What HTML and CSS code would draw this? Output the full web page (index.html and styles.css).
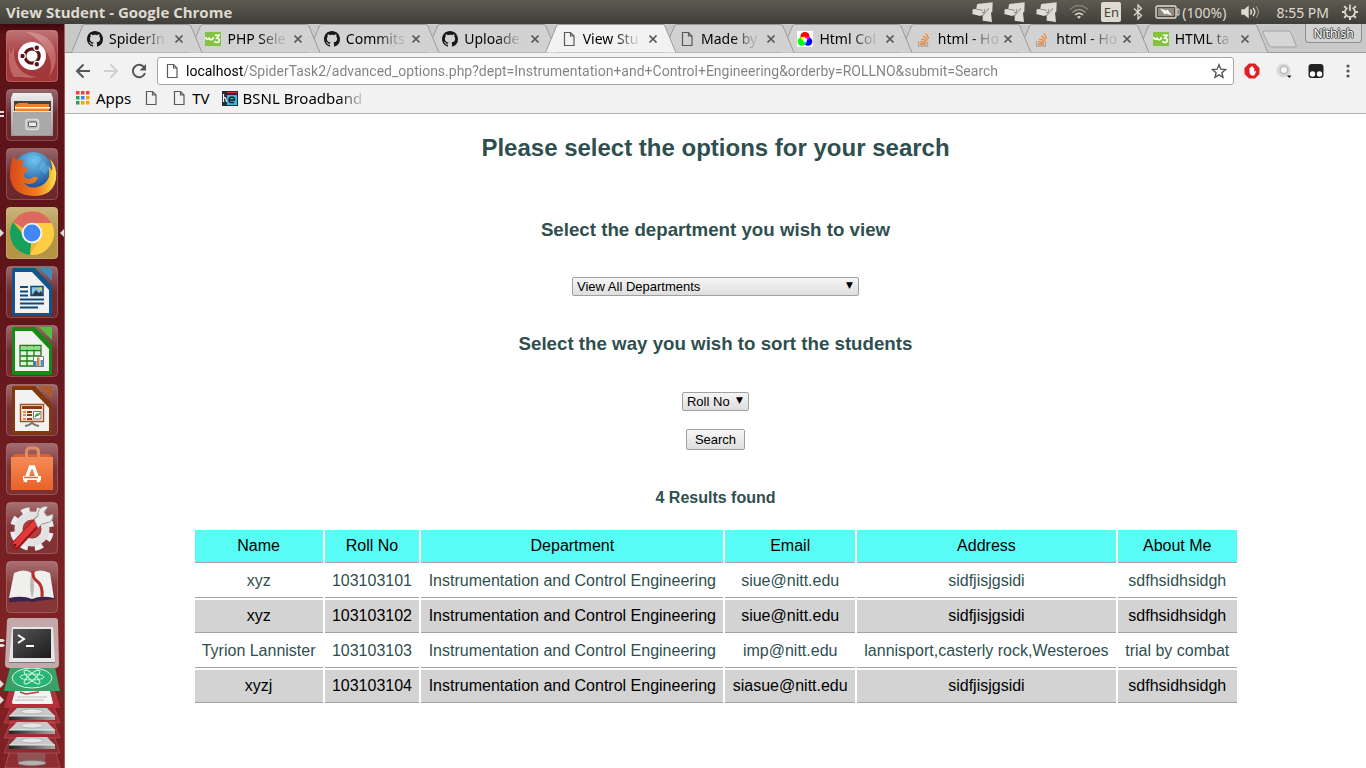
FILE: index.html
```html
<!DOCTYPE html>
<html lang="en">
<head>
<meta charset="utf-8">
<title>View Student</title>
<meta name="viewport" content="width=device-width, initial-scale=1">
<link rel="stylesheet" href="styles.css">
</head>
<body>
<svg class="defs" width="0" height="0" aria-hidden="true">
  <defs>
    <linearGradient id="gloss" x1="0" y1="0" x2="0" y2="1"><stop offset="0" stop-color="#fff" stop-opacity=".36"/><stop offset=".5" stop-color="#fff" stop-opacity=".1"/><stop offset="1" stop-color="#fff" stop-opacity=".08"/></linearGradient>
    <linearGradient id="metal" x1="0" y1="0" x2="0" y2="1"><stop offset="0" stop-color="#eee"/><stop offset="1" stop-color="#979797"/></linearGradient>
    <linearGradient id="orange" x1="0" y1="0" x2="0" y2="1"><stop offset="0" stop-color="#f58b55"/><stop offset="1" stop-color="#e8622a"/></linearGradient>
    <linearGradient id="flame" x1="0" y1="0" x2="1" y2="0"><stop offset="0" stop-color="#d9471b"/><stop offset=".6" stop-color="#f08020"/><stop offset="1" stop-color="#ffe14a"/></linearGradient>
    <radialGradient id="globe" cx=".5" cy=".2" r=".8"><stop offset="0" stop-color="#6cc4ee"/><stop offset="1" stop-color="#12408c"/></radialGradient>
    <linearGradient id="screen" x1="0" y1="0" x2="1" y2="1"><stop offset="0" stop-color="#555"/><stop offset="1" stop-color="#1c1c1c"/></linearGradient>
    <linearGradient id="rim" x1="0" y1="0" x2="1" y2="0"><stop offset="0" stop-color="#222"/><stop offset="1" stop-color="#aaa"/></linearGradient>
    <symbol id="tab" viewBox="0 0 131 29" preserveAspectRatio="none"><path d="M.5 28.500 11.500 2q.6-1.500 2-1.500h104q1.400 0 2 1.500L130.500 28.500" stroke="#9a9a9a" vector-effect="non-scaling-stroke"/></symbol>
    <symbol id="page" viewBox="0 0 16 16"><path d="M3.500 1.500h6l3.500 3.500v9.500h-9.500zM9.500 1.500v3.500h3.500" fill="none" stroke="#5a5a5a" stroke-width="1.200"/></symbol>
    <symbol id="x" viewBox="0 0 16 16"><path d="m4.500 4.500 7 7m0-7-7 7" stroke="#555" stroke-width="1.700"/></symbol>
    <symbol id="octo" viewBox="0 0 16 16"><path fill="#191717" d="M8 0C3.580 0 0 3.580 0 8c0 3.540 2.290 6.530 5.470 7.590.4.070.55-.17.55-.38 0-.19-.01-.82-.01-1.490-2.010.37-2.530-.49-2.690-.94-.09-.23-.48-.94-.82-1.130-.28-.15-.68-.52-.01-.53.63-.01 1.080.58 1.230.82.72 1.210 1.870.87 2.330.66.070-.52.28-.87.51-1.070-1.780-.2-3.640-.89-3.640-3.950 0-.87.310-1.590.82-2.150-.08-.2-.36-1.020.08-2.120 0 0 .67-.21 2.200.82.64-.18 1.320-.27 2-.27s1.360.09 2 .27c1.530-1.040 2.200-.82 2.200-.82.440 1.100.160 1.920.080 2.120.510.560.820 1.270.820 2.150 0 3.070-1.870 3.750-3.650 3.950.290.250.540.730.540 1.480 0 1.070-.010 1.930-.010 2.200 0 .210.150.460.550.380A8.010 8.010 0 0 0 16 8c0-4.420-3.580-8-8-8z"/></symbol>
    <symbol id="w3" viewBox="0 0 16 16"><path fill="#83c341" d="M0 1h16v14H0z"/><path d="M.8 6c0 3 3.200 3 3.400.5.200 3 4 3 4.100-.5M9.800 4.200h4.400l-2.500 3q2.800 0 2.600 2.400c-.3 2.600-4.200 2.600-4.800.4" fill="none" stroke="#fff" stroke-width="1.500"/></symbol>
    <symbol id="so" viewBox="0 0 16 16"><path d="M2.500 10v5h9v-5" fill="none" stroke="#a9a9a9" stroke-width="1.300"/><path d="M4 13h6M4.200 10.700l5.900.6M5 8l5.700 1.700M7 5l4.600 3.600M9.800 2.500l3 5" stroke="#f48024" stroke-width="1.300"/></symbol>
    <symbol id="rgb" viewBox="0 0 16 16"><path fill="#fff" d="M0 0h16v16H0z"/><circle cx="8" cy="5.500" r="4.500" fill="red"/><circle cx="5" cy="10.500" r="4.300" fill="#0f0"/><circle cx="11" cy="10.500" r="4.300" fill="#00f"/><path d="m3.500 6.300 4.500-.8v4l-3-.5z" fill="#ff0"/><path d="m12.500 6.300-4.500-.8v4l3-.5z" fill="#f0f"/><path d="m6 10 2-1 2 1-2 4z" fill="#0ff"/><circle cx="8" cy="9" r="2" fill="#fff"/></symbol>
    <symbol id="drop" viewBox="0 0 22 22"><path d="M6.300 3 21.700 1.300l-.4 9.400-1.300 1 1 9.300-9.300-1.300V14L9 15l-7.700-2 .4-4.700L5 8z" fill="#dedbd4"/><path d="m14 8-1.500 6.500M18 7l-4 5-3-.5M5 8l7 1.500" fill="none" stroke="#85827a" stroke-width=".9"/></symbol>
    <symbol id="tile" viewBox="0 0 52 52"><rect x=".5" y=".5" width="51" height="51" rx="4" fill="url(#gloss)" stroke="#fff" stroke-opacity=".22"/></symbol>
  </defs>
</svg>

<header class="panel">
  <span class="panel-title">View Student - Google Chrome</span>
  <div class="indicators">
    <svg class="drop" width="22" height="22"><use href="#drop"/></svg>
    <svg class="drop" width="22" height="22"><use href="#drop"/></svg>
    <svg class="drop" width="22" height="22"><use href="#drop"/></svg>
    <svg class="wifi" width="20" height="16" viewBox="0 0 20 16" fill="none" stroke="#dfdbd2" stroke-width="1.500"><path d="M1 5.500q9-8 18 0" opacity=".35"/><path d="M3.500 8.500q6.500-6 13 0" opacity=".5"/><path d="M6 11q4-3.500 8 0"/><path d="m8 12.800q2-1.500 4 0l-2 2z" fill="#dfdbd2" stroke="none"/></svg>
    <span class="lang">En</span>
    <svg class="bt" width="10" height="16" viewBox="0 0 10 16" fill="none" stroke="#dfdbd2" stroke-width="1.300"><path d="m1 4.500 7.500 7L5 15V1l3.500 3.500-7.500 7"/></svg>
    <svg class="battery" width="25" height="14" viewBox="0 0 25 14"><rect x="1" y="1" width="20" height="12" rx="1.500" fill="none" stroke="#dfdbd2" stroke-width="1.400"/><path d="M3 3h16v8H3z" fill="#8e8b83"/><path d="M22 4h2v6h-2z" fill="none" stroke="#dfdbd2"/><path d="m5 3.500 6.500 2 1-1 4.500 6-6-2-1 1.200z" fill="#f5f3ee"/></svg>
    <span class="charge">(100%)</span>
    <svg class="sound" width="20" height="14" viewBox="0 0 20 14" fill="none" stroke="#dfdbd2" stroke-width="1.400"><path d="M1 5h2.500L7 2v10L3.500 9H1z" fill="#dfdbd2"/><path d="M9.500 4.500q2 2.500 0 5M12 3q3.500 4 0 8"/><path d="M15 1.500q5 5.500 0 11" opacity=".45"/></svg>
    <time class="clock">8:55 PM</time>
    <svg width="18" height="18" viewBox="0 0 18 18" fill="none" stroke="#dfdbd2"><path d="M6.500 4.700a5 5 0 1 0 5 0" stroke-width="1.700"/><path d="M9 1.500v6.500" stroke-width="1.700"/><path d="m4.800 4.800-1.600-1.600M13.200 4.800l1.600-1.600M3.500 9H1m13.500 0H17M5 13l-1.800 1.800m9.800-1.800 1.800 1.800M9 14.500V17" stroke-width="2"/></svg>
  </div>
</header>

<div class="desktop">
  <nav class="launcher" aria-label="Launcher">
    <ul class="apps">
      <li><button aria-label="Dash"><svg viewBox="0 0 52 52"><rect width="52" height="52" rx="4" fill="#9a2527"/><path d="M20 2q26 1 29 20 3 12-6 25 5-14-2-24Q35 9 20 2zM3 14q2 30 28 33-25 4-28-15zM8 47q-9-12 0-31-2 25 19 31z" fill="#e9a3a0" opacity=".4"/><use href="#tile"/><circle cx="26" cy="26" r="14" fill="#fff"/><circle cx="26" cy="26" r="7.200" fill="none" stroke="#5c1418" stroke-width="3.200"/><g fill="#5c1418" stroke="#fff" stroke-width="1.200"><circle cx="16.500" cy="26" r="2.800"/><circle cx="30.800" cy="17.800" r="2.800"/><circle cx="30.800" cy="34.200" r="2.800"/></g></svg></button></li>
      <li class="twin"><button aria-label="Files"><svg viewBox="0 0 52 52"><use href="#tile"/><path d="M7 4h38l2 5v38H5V9z" fill="url(#metal)"/><path d="M8 12h37v13H8z" fill="#444"/><path d="m9 16 4-2h8l2 1h20v9H9z" fill="#ef812b"/><path d="M9 18h35v1.500H9z" fill="#fff"/><path d="M7 22h38v24H7z" fill="#a9a9a9"/><path d="M7 22h38v1H7z" fill="#e6e6e6"/><rect x="20" y="30.500" width="12.500" height="10" rx="2" fill="#b8b8b8" stroke="#ddd" stroke-width="1.500"/><rect x="22.500" y="33" width="8" height="4.500" rx="1" fill="#ececec" stroke="#555"/></svg></button></li>
      <li><button aria-label="Firefox"><svg viewBox="0 0 52 52"><use href="#tile"/><circle cx="27" cy="24" r="20" fill="url(#globe)"/><path d="M29 7q9 2 5 7l-5 3-3-3zM37 13l7 8-5 5-6-5z" fill="#7cc9ec" opacity=".35"/><path d="M7 9l4 3 8 1q-5 3-1 7l4-1q-1 5-4 7-1 5 6 5 4-4 8-1-2 5-8 6-3 0-6-1 5 6 13 4 9-2 12-10 1-8-1-12l4 6q1-7-3-13 9 8 7 21-3 17-22 17Q5 47 4 28q0-11 3-19z" fill="url(#flame)"/></svg></button></li>
      <li class="current"><button aria-label="Google Chrome"><svg viewBox="0 0 52 52"><rect width="52" height="52" rx="4" fill="#ad8b36"/><use href="#tile"/><circle cx="26" cy="26" r="22" fill="#e8b93b"/><path d="M26 26 7 15A22 22 0 0 1 45.500 16H26z" fill="#dd6a60"/><path d="M26 26H16L7 15a22 22 0 0 0 17 33z" fill="#16a05c"/><path d="M26 16h19.500A22 22 0 0 1 24 48l11-18z" fill="#ffcd41"/><circle cx="26" cy="26" r="10.300" fill="#f5f5f5"/><circle cx="26" cy="26" r="8.400" fill="#4285f4"/></svg></button></li>
      <li><button aria-label="Writer"><svg viewBox="0 0 52 52"><use href="#tile"/><path d="M8 2h21l17 18v28q0 2-2 2H8q-2 0-2-2V4q0-2 2-2z" fill="#11558c"/><path d="M33 2h13v13z" fill="#4487b9"/><path d="M9 6h17l17 18v23H9z" fill="#f2f2f2"/><path d="M14 21h8m-8 4.500h8m-8 4h8m-8 4h24m-24 4h24m-24 4h18" stroke="#0a4a7e" stroke-width="2"/><path d="M25 20.500h12v9H25z" fill="#89c6e8" stroke="#0a4a7e" stroke-width="1.500"/><path d="m26 29 4-5 3 3 2-2 2 4z" fill="#303b40"/><circle cx="34.500" cy="22.500" r="1.300" fill="#fc3"/></svg></button></li>
      <li><button aria-label="Calc"><svg viewBox="0 0 52 52"><use href="#tile"/><path d="M8 2h21l17 18v28q0 2-2 2H8q-2 0-2-2V4q0-2 2-2z" fill="#188a12"/><path d="M33 2h13v13z" fill="#55bd42"/><path d="M9 6h17l17 18v22H9z" fill="#f2f2f2"/><path d="M14 20.500h21V41H14zM14 25.500h21M14 31h21M14 36h21M21 20.500V41M28 20.500V41" fill="#dff4da" stroke="#1b7d15" stroke-width="1.300"/><path d="M15 21.500h19v3H15z" fill="#8edb83"/><path d="M27.500 31.500h10v10h-10z" fill="#fff" stroke="#777"/><path d="M28 36h2.500v5H28z" fill="#2a82c6"/><path d="M31 32.500h2.500V41H31z" fill="#e4782a"/><path d="M34.500 35H37v6h-2.500z" fill="#4595cd"/></svg></button></li>
      <li><button aria-label="Impress"><svg viewBox="0 0 52 52"><use href="#tile"/><path d="M8 2h21l17 18v28q0 2-2 2H8q-2 0-2-2V4q0-2 2-2z" fill="#82390c"/><path d="M33 2h13v13z" fill="#ab5b2e"/><path d="M9 6h17l17 18v23H9z" fill="#f2f2f2"/><path d="M14.500 20.500h23v17h-23z" fill="#fbeee2" stroke="#a54e1c" stroke-width="1.400"/><path d="M17 24h18v-1H17zM21 28h5m-5 3h5m-5 4h5" stroke="#8a3a10" stroke-width="2"/><path d="M17 28h3m-3 3h3m-3 4h3" stroke="#e68b4c" stroke-width="2"/><path d="M27.500 27.500h7.500v7.500h-7.500z" fill="#fff" stroke="#777"/><path d="m29 33 2-3 1 1 2-2" stroke="#2a9b2a" fill="none" stroke-width="1.400"/><path d="M19 42q6-1 7-4 1 3 7 4" fill="none" stroke="#777" stroke-width="2"/></svg></button></li>
      <li><button aria-label="Software Center"><svg viewBox="0 0 52 52"><use href="#tile"/><path d="M8 11h36l3 5v31H5V16z" fill="#d95f36"/><path d="M5 14h42v33H5z" fill="url(#orange)"/><path d="M20.500 17V9q0-4 4-4h4q4 0 4 4v8" fill="none" stroke="#e58a66" stroke-width="3"/><path d="m19 39 5.500-15h3L33 39" fill="none" stroke="#fff" stroke-width="3.600"/><path d="M17 35h18" stroke="#fff" stroke-width="4"/><path d="M18 34.500h14" stroke="#ed6b30" stroke-width="1.500"/></svg></button></li>
      <li><button aria-label="System Settings"><svg viewBox="0 0 52 52"><use href="#tile"/><circle cx="26" cy="27" r="19" fill="none" stroke="#ececec" stroke-width="6" stroke-dasharray="8 6.920" transform="rotate(12 26 27)"/><circle cx="26" cy="27" r="13.500" fill="none" stroke="#e2e2e2" stroke-width="8"/><circle cx="26" cy="27" r="9" fill="#b53d3c"/><path d="m10 43 22-24" stroke="#a01318" stroke-width="9" stroke-linecap="round"/><path d="m10 42 22-24" stroke="#e23a3a" stroke-width="6" stroke-linecap="round"/><path d="m28 17 4-3q-1-8 7-10l3 1-4 5 3 4 6-2q1 8-7 9l-4 1-4 4z" fill="#e8e8e8" stroke="#888" stroke-width=".8"/><circle cx="9" cy="43" r="1.300" fill="#5c0b0d"/></svg></button></li>
      <li><button aria-label="Dictionary"><svg viewBox="0 0 52 52"><use href="#tile"/><path d="m3 37 4-16 19 16 19-16 4 17-19 2q-4 2-8 0L3 41z" fill="#38234d"/><path d="M8 12q10-5 18 0 8-5 18 0l4 25q-13-3-22 1-9-4-23-1z" fill="#efefed"/><path d="M26 12q-4 10 0 26 4-12 0-26z" fill="#b9b9b5"/><path d="M27 10q-1 7 5 11 5 4 4 15" fill="none" stroke="#ba2d2d" stroke-width="3"/></svg></button></li>
    </ul>
    <svg class="stack" viewBox="0 620 65 148" role="img" aria-label="More applications">
      <path d="M11 745h43l6 23H5z" fill="#8f2e31" stroke="#b9696c" stroke-width=".6"/><path d="M17 749h29l-1 15q-13 4-27 0z" fill="#8f5354"/><ellipse cx="32" cy="763" rx="14" ry="2.500" fill="#b5b0b0" stroke="#777" stroke-width=".6"/>
      <path d="M11 736h43l6 17H4z" fill="#8a2b2e" stroke="#b9696c" stroke-width=".5"/><path d="M11 722h43l6 16H4zM11 707h43l6 16H4z" fill="#a52a33" stroke="#b9696c" stroke-width=".5"/>
      <g id="drives"><path d="m17 708 30 0 8 8H9z" fill="#c9c9c9"/><ellipse cx="32" cy="711.500" rx="11" ry="2.500" fill="#e6e6e6" stroke="#a0a0a0" stroke-width=".6"/><path d="M9 716h46v4H9z" fill="url(#rim)"/><path d="M9 715.500h46v1H9z" fill="#eee"/></g>
      <use href="#drives" y="14"/><use href="#drives" y="29"/>
      <path d="M9 690h46l5 18H4z" fill="#b4303a"/><path d="M15 691h35l3 12q0 1-2 1H13q-1 0-1-2z" fill="#f4f4f4"/><path d="M17 697h30M15 700h29" stroke="#bbb"/><path d="m20 692 6 2 13-2" fill="none" stroke="#c43a3a" stroke-width="1.500"/>
      <path d="M10 667h45l5 24H4z" fill="#3aa066"/><ellipse cx="32" cy="678" rx="20" ry="10" fill="#26b574" stroke="#d9f3e5"/><g fill="none" stroke="#c9f2de"><ellipse cx="32" cy="677" rx="12" ry="3"/><ellipse cx="32" cy="677" rx="10" ry="3" transform="rotate(40 32 677)"/><ellipse cx="32" cy="677" rx="10" ry="3" transform="rotate(-40 32 677)"/></g>
      <path d="M10 618h45q3 0 3 3l1 43q0 4-4 4H9q-4 0-4-4l2-43q0-3 3-3z" fill="#c3a9a9"/><path d="M12 627h41l2 36H9z" fill="#e6e6e6"/><path d="M13 629h38v29H13z" fill="url(#screen)"/><path d="M9 662h46v1H9z" fill="#777"/><path d="m18 635 6 4-6 4" fill="none" stroke="#fff" stroke-width="2"/><path d="M26 646h8" stroke="#fff" stroke-width="2"/>
      <path d="M0 639h3l2 1.500-2 1.500H0zM0 644h3l2 1.500-2 1.500H0zM0 680l4 4-4 4zM0 696l4 4-4 4z" fill="#ddd"/>
    </svg>
  </nav>

  <div class="browser">
    <div class="tabstrip">
      <ul class="tabs">
        <li class="tab"><svg class="shape"><use href="#tab"/></svg><svg class="fav"><use href="#octo"/></svg><a class="name" href="#">SpiderIn</a><button class="close" aria-label="Close"><svg><use href="#x"/></svg></button></li>
        <li class="tab"><svg class="shape"><use href="#tab"/></svg><svg class="fav"><use href="#w3"/></svg><a class="name" href="#">PHP Sele</a><button class="close" aria-label="Close"><svg><use href="#x"/></svg></button></li>
        <li class="tab"><svg class="shape"><use href="#tab"/></svg><svg class="fav"><use href="#octo"/></svg><a class="name" href="#">Commits</a><button class="close" aria-label="Close"><svg><use href="#x"/></svg></button></li>
        <li class="tab"><svg class="shape"><use href="#tab"/></svg><svg class="fav"><use href="#octo"/></svg><a class="name" href="#">Uploade</a><button class="close" aria-label="Close"><svg><use href="#x"/></svg></button></li>
        <li class="tab active"><svg class="shape"><use href="#tab"/></svg><svg class="fav"><use href="#page"/></svg><a class="name" href="#">View Stu</a><button class="close" aria-label="Close"><svg><use href="#x"/></svg></button></li>
        <li class="tab"><svg class="shape"><use href="#tab"/></svg><svg class="fav"><use href="#page"/></svg><a class="name" href="#">Made by</a><button class="close" aria-label="Close"><svg><use href="#x"/></svg></button></li>
        <li class="tab"><svg class="shape"><use href="#tab"/></svg><svg class="fav"><use href="#rgb"/></svg><a class="name" href="#">Html Col</a><button class="close" aria-label="Close"><svg><use href="#x"/></svg></button></li>
        <li class="tab"><svg class="shape"><use href="#tab"/></svg><svg class="fav"><use href="#so"/></svg><a class="name" href="#">html - Ho</a><button class="close" aria-label="Close"><svg><use href="#x"/></svg></button></li>
        <li class="tab"><svg class="shape"><use href="#tab"/></svg><svg class="fav"><use href="#so"/></svg><a class="name" href="#">html - Ho</a><button class="close" aria-label="Close"><svg><use href="#x"/></svg></button></li>
        <li class="tab"><svg class="shape"><use href="#tab"/></svg><svg class="fav"><use href="#w3"/></svg><a class="name" href="#">HTML ta</a><button class="close" aria-label="Close"><svg><use href="#x"/></svg></button></li>
      </ul>
      <button class="new-tab" aria-label="New tab"><svg width="36" height="18" viewBox="0 0 36 18"><path d="M2 1h24q2 0 3 2l5 12q1 2-1 2H10q-2 0-3-2L1 3q-1-2 1-2z" fill="#d6d6d6" stroke="#a2a2a2"/></svg></button>
      <button class="user">Nithish</button>
    </div>

    <div class="toolbar">
      <div class="nav-row">
        <button aria-label="Back"><svg width="16" height="16" viewBox="0 0 16 16" fill="none" stroke="#555" stroke-width="2"><path d="M15 8H2m6.500-6.500L2 8l6.500 6.500"/></svg></button>
        <button aria-label="Forward"><svg width="16" height="16" viewBox="0 0 16 16" fill="none" stroke="#d0d0d0" stroke-width="2"><path d="M1 8h13M7.500 1.500 14 8l-6.500 6.500"/></svg></button>
        <button aria-label="Reload"><svg width="16" height="16" viewBox="0 0 16 16"><path d="M13 4.200A6.200 6.200 0 1 0 14 10" fill="none" stroke="#555" stroke-width="2"/><path d="M15 1v6.500H8.500z" fill="#555"/></svg></button>
        <div class="address">
          <svg width="16" height="16"><use href="#page"/></svg>
          <input class="url" type="text" aria-label="Address" value="localhost/SpiderTask2/advanced_options.php?dept=Instrumentation+and+Control+Engineering&amp;orderby=ROLLNO&amp;submit=Search">
          <button aria-label="Bookmark"><svg width="16" height="16" viewBox="0 0 16 16"><path d="m8 1.800 1.800 4.400 4.700.4-3.600 3.100 1.100 4.600L8 11.800l-4 2.500 1.100-4.600L1.500 6.600l4.700-.4z" fill="none" stroke="#555" stroke-width="1.400"/></svg></button>
        </div>
        <div class="extensions">
          <button aria-label="Ad blocker"><svg width="16" height="16" viewBox="0 0 16 16"><path d="M5 .5h6L15.500 5v6L11 15.500H5L.5 11V5z" fill="#df1f26"/><path d="M5.500 9V5q.6-.8 1.200 0V4q.6-.8 1.200 0v-.5q.6-.7 1.200 0V5q.7-.7 1.200 0v4l1-1q1-.2.8.7L10.300 12.500H7.500Q5.500 11.500 5.500 9z" fill="#fff"/></svg></button>
          <button aria-label="Extension"><svg width="16" height="16" viewBox="0 0 16 16"><circle cx="7.500" cy="7.500" r="7" fill="#d9d9d9"/><circle cx="8" cy="7" r="3.800" fill="#f5f5f5" stroke="#bbb" stroke-width="1.500"/><path d="M11 12.500h4.500l-2.200 2.500z" fill="#111"/></svg></button>
          <button aria-label="Tampermonkey"><svg width="16" height="16" viewBox="0 0 16 16"><rect x=".5" y="1" width="15" height="14" rx="3" fill="#222"/><circle cx="4.500" cy="11" r="2.700" fill="#fff"/><circle cx="11.500" cy="11" r="2.700" fill="#fff"/></svg></button>
          <button aria-label="Menu"><svg width="16" height="16" viewBox="0 0 16 16" fill="#555"><circle cx="8" cy="3" r="1.600"/><circle cx="8" cy="8" r="1.600"/><circle cx="8" cy="13" r="1.600"/></svg></button>
        </div>
      </div>
      <nav class="bookmarks" aria-label="Bookmarks">
        <a href="#"><svg width="14" height="14" viewBox="0 0 14 14"><path d="M0 0h3.500v3.500H0zM5 0h3.500v3.500H5zM10 0h3.500v3.500H10z" fill="#e8453c"/><path d="M0 5h3.500v3.500H0zM0 10h3.500v3.500H0z" fill="#2ca05a"/><path d="M5 5h3.500v3.500H5z" fill="#4285f4"/><path d="M10 5h3.500v3.500H10zM5 10h3.500v3.500H5zM10 10h3.500v3.500H10z" fill="#f2a60d"/></svg>Apps</a>
        <a href="#" aria-label="Bookmark"><svg width="16" height="16"><use href="#page"/></svg></a>
        <a href="#"><svg width="16" height="16"><use href="#page"/></svg>TV</a>
        <a href="#"><svg width="16" height="16" viewBox="0 0 16 16"><path d="M0 1h16v15H0z" fill="#2a2d33"/><path d="M5 2h10v1H5z" fill="#c33"/><path d="M5 5h10v10H5z" fill="#38b6e6"/><path d="M1.500 4v8M2 8q2-1.500 2.500 4" stroke="#fff" fill="none" stroke-width="1.200"/><path d="M7 10h5.500q0-3-2.600-3T7 10t5 2.500" fill="none" stroke="#222" stroke-width="1.500"/></svg><span class="long">BSNL Broadband</span></a>
      </nav>
    </div>

    <main class="document">
      <h2>Please select the options for your search</h2>
      <form class="search" onsubmit="return false">
        <h3><label for="dept">Select the department you wish to view</label></h3>
        <div class="picker wide"><select id="dept"><option>View All Departments</option><option>Instrumentation and Control Engineering</option></select></div>
        <h3><label for="order">Select the way you wish to sort the students</label></h3>
        <div class="picker"><select id="order"><option>Roll No</option><option>Name</option></select></div>
        <button class="submit" type="submit">Search</button>
      </form>
      <h4>4 Results found</h4>
      <table class="results">
        <thead><tr><th>Name</th><th>Roll No</th><th>Department</th><th>Email</th><th>Address</th><th>About Me</th></tr></thead>
        <tbody>
          <tr><td>xyz</td><td>103103101</td><td>Instrumentation and Control Engineering</td><td>siue@nitt.edu</td><td>sidfjisjgsidi</td><td>sdfhsidhsidgh</td></tr>
          <tr><td>xyz</td><td>103103102</td><td>Instrumentation and Control Engineering</td><td>siue@nitt.edu</td><td>sidfjisjgsidi</td><td>sdfhsidhsidgh</td></tr>
          <tr><td>Tyrion Lannister</td><td>103103103</td><td>Instrumentation and Control Engineering</td><td>imp@nitt.edu</td><td>lannisport,casterly rock,Westeroes</td><td>trial by combat</td></tr>
          <tr><td>xyzj</td><td>103103104</td><td>Instrumentation and Control Engineering</td><td>siasue@nitt.edu</td><td>sidfjisjgsidi</td><td>sdfhsidhsidgh</td></tr>
        </tbody>
      </table>
    </main>
  </div>
</div>
</body>
</html>
```
FILE: styles.css
```css
* { box-sizing: border-box; }

body {
  margin: 0;
  height: 100vh;
  display: flex;
  flex-direction: column;
  overflow: hidden;
  font-family: "Noto Sans", "Open Sans", sans-serif;
  font-size: 14px;
}

.defs { position: absolute; }
svg { display: block; flex: none; }
ul { list-style: none; margin: 0; padding: 0; }
a { color: inherit; text-decoration: none; }
button { border: 0; padding: 0; background: none; font: inherit; color: inherit; }

/* Top panel */
.panel {
  height: 24px;
  flex: none;
  display: flex;
  align-items: center;
  justify-content: space-between;
  padding: 0 7px 0 6px;
  background: linear-gradient(#5e5b50, #3f3e39);
  color: #dfdbd2;
}
.panel-title { font: bold 15px/22px "Open Sans", sans-serif; }
.indicators { display: flex; align-items: center; }
.drop { margin-right: 10px; }
.wifi { margin: 0 12px 0 2px; }
.lang {
  width: 20px;
  height: 20px;
  margin-right: 12px;
  border-radius: 2px;
  background: #dfdbd2;
  color: #45433d;
  font-size: 13px;
  line-height: 20px;
  text-align: center;
}
.bt { margin-right: 12px; }
.battery { margin-right: 2px; }
.charge { margin-right: 15px; }
.sound { margin-right: 15px; }
.clock { margin-right: 12px; }

.desktop { flex: 1; min-height: 0; display: flex; }

/* Launcher */
.launcher {
  width: 65px;
  flex: none;
  padding-top: 6px;
  overflow: hidden;
  border-right: 1px solid #a65c58;
  background: linear-gradient(#3d0a0d, #5c1217 10px, #5f151a 35%, #7d2325 80%, #7d2022);
}
.apps li { position: relative; height: 59px; padding-left: 6px; }
.apps button, .apps svg { display: block; width: 52px; height: 52px; }
.stack { width: 65px; height: 148px; overflow: visible; }
.current::before, .current::after, .twin::before {
  content: "";
  position: absolute;
  top: 22px;
  border: 4px solid transparent;
}
.current::before { left: 0; border-left-color: #ddd; border-right-width: 0; }
.current::after { right: 0; border-right-color: #ddd; border-left-width: 0; }
.twin::before { left: 0; width: 4px; height: 2px; border: solid #ddd; border-width: 2px 0; }

/* Browser */
.browser { flex: 1; min-width: 0; display: flex; flex-direction: column; background: #fff; }
.tabstrip {
  height: 29px;
  flex: none;
  display: flex;
  padding: 0 4px 0 6px;
  background: #c9c9c9;
  border-bottom: 1px solid #9a9a9a;
}
.tabs { display: flex; flex: 0 1 1184px; min-width: 0; }
.tab {
  position: relative;
  flex: 1;
  min-width: 0;
  height: 29px;
  display: flex;
  align-items: center;
  padding: 0 2px 0 16px;
}
.tab:nth-child(1) { z-index: 10; }
.tab:nth-child(2) { z-index: 9; }
.tab:nth-child(3) { z-index: 8; }
.tab:nth-child(4) { z-index: 7; }
.tab:nth-child(6) { z-index: 5; }
.tab:nth-child(7) { z-index: 4; }
.tab:nth-child(8) { z-index: 3; }
.tab:nth-child(9) { z-index: 2; }
.tab:nth-child(10) { z-index: 1; }
.tab.active { z-index: 11; }
.shape {
  position: absolute;
  inset: 0 auto auto 0;
  z-index: -1;
  width: calc(100% + 13px);
  height: 29px;
  fill: #d2d2d2;
}
.active .shape { fill: #f2f2f2; }
.fav { width: 16px; height: 16px; }
.name {
  flex: 1;
  min-width: 0;
  margin-left: 6px;
  white-space: nowrap;
  color: #000;
  mask-image: linear-gradient(90deg, #000 50%, rgb(0 0 0 / .15) 85%);
}
.close svg { width: 16px; height: 16px; }
.new-tab { margin-left: 7px; height: 28px; padding-top: 2px; }
.user {
  margin-left: auto;
  width: 57px;
  height: 19px;
  border: 1px solid #8f8f8f;
  border-top: 0;
  border-radius: 0 0 4px 4px;
  background: #d2d2d2;
  color: #fff;
  font-size: 12px;
  text-shadow: 1px 0 #444, -1px 0 #444, 0 1px #444, 0 -1px #444;
}

.toolbar {
  flex: none;
  background: #f2f2f2;
  border-bottom: 1px solid #b5b5b5;
}
.nav-row { display: flex; align-items: center; gap: 12px; height: 36px; padding: 0 10px; }
.address {
  flex: 1;
  min-width: 0;
  height: 28px;
  margin: 0 1px 0 -2px;
  display: flex;
  align-items: center;
  padding: 0 6px;
  border: 1px solid #a6a6a6;
  border-radius: 3px;
  background: #fff;
}
.url {
  flex: 1;
  min-width: 0;
  margin-left: 6px;
  border: 0;
  padding: 0;
  outline: 0;
  font: 14px Roboto, "Open Sans", sans-serif;
  color: transparent;
  background: linear-gradient(90deg, #000 57px, #808080 57px) text;
}
.extensions { display: flex; align-items: center; gap: 16px; margin-left: -3px; }
.bookmarks { display: flex; align-items: center; gap: 12px; height: 24px; padding: 0 11px 6px; font-size: 15px; }
.bookmarks a { display: flex; align-items: center; gap: 6px; color: #000; }
.bookmarks a + a { gap: 5px; }
.long {
  white-space: nowrap;
  mask-image: linear-gradient(90deg, #000 80%, rgb(0 0 0 / .15));
}

/* Page */
.document {
  flex: 1;
  min-height: 0;
  overflow: hidden;
  display: flex;
  flex-direction: column;
  align-items: center;
  color: #2f4f4f;
  font-family: "Liberation Sans", Arial, sans-serif;
  font-size: 16px;
  line-height: 18px;
  text-align: center;
}
.document h2 { margin: 20px 0 58px; font-size: 24px; line-height: 27px; }
.document h3 { margin: 0 0 37px; line-height: 21px; }
.document h4 { margin: 39px 0 21px; }
.search { display: flex; flex-direction: column; align-items: center; }
.picker { position: relative; margin: 1px 0 18px; }
.wide { width: 287px; margin: 0 0 37px; }
.picker::after {
  content: "▼";
  position: absolute;
  right: 6px;
  top: 0;
  color: #000;
  font: 9px/16px "DejaVu Sans", sans-serif;
  pointer-events: none;
}
.picker select {
  display: block;
  width: 100%;
  height: 19px;
  padding: 0 18px 0 4px;
  appearance: none;
}
.picker select, .submit {
  border: 1px solid #a0a0a0;
  border-radius: 2px;
  background: linear-gradient(#f6f6f6, #dedede);
  color: #000;
  font: 13px "Liberation Sans", Arial, sans-serif;
}
.submit { height: 21px; padding: 0 8px; }
.results { width: 1046px; max-width: 100%; border-spacing: 2px; }
.results th, .results td { padding: 7px; border-bottom: 1px solid #a3a3a3; font-weight: normal; }
.results th { background: #57fcf4; color: #000; }
.results tr:nth-child(even) td { background: #d3d3d3; color: #000; }
```
